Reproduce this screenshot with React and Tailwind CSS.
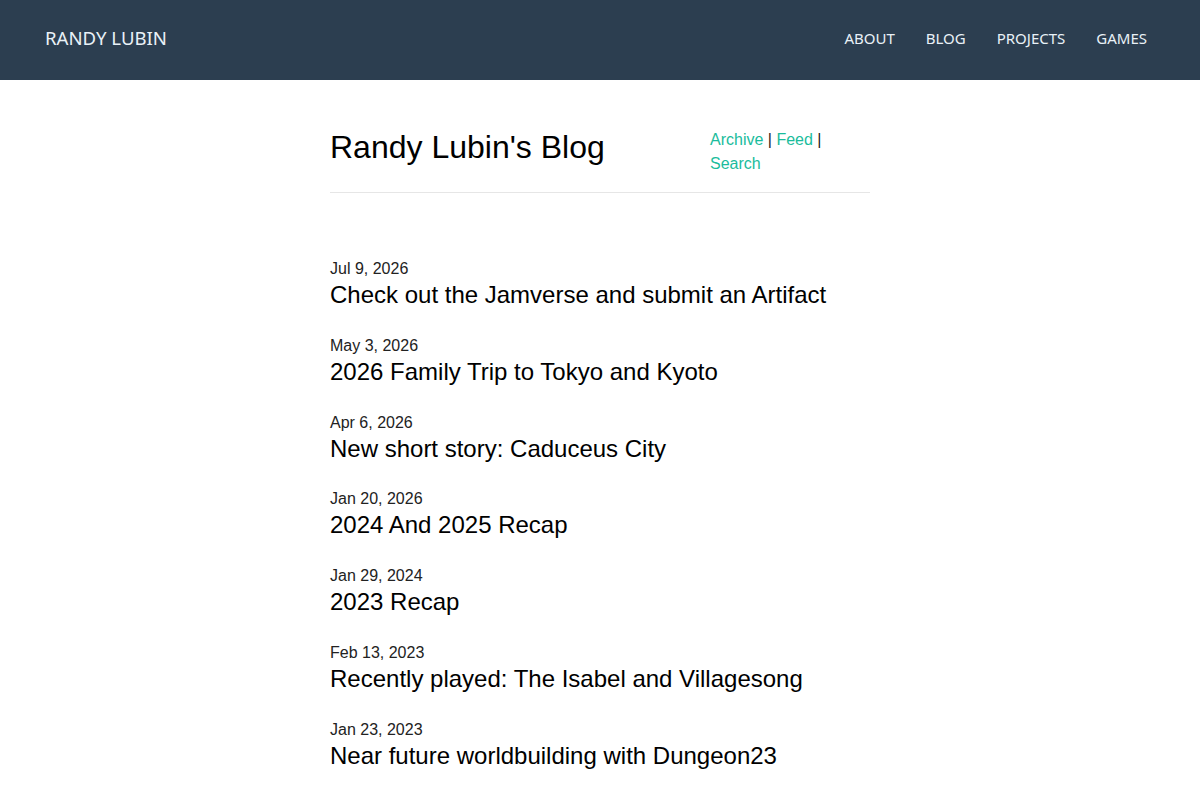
export default function App() {
  const posts = [
    ["Jul 9, 2026", "Check out the Jamverse and submit an Artifact"],
    ["May 3, 2026", "2026 Family Trip to Tokyo and Kyoto"],
    ["Apr 6, 2026", "New short story: Caduceus City"],
    ["Jan 20, 2026", "2024 And 2025 Recap"],
    ["Jan 29, 2024", "2023 Recap"],
    ["Feb 13, 2023", "Recently played: The Isabel and Villagesong"],
    ["Jan 23, 2023", "Near future worldbuilding with Dungeon23"],
  ];
  return (
    <div className="min-h-screen bg-white" style={{ fontFamily: '"Liberation Sans", Arial, sans-serif' }}>
      <header className="h-[80px] bg-[#2c3e50] flex items-center justify-between pl-[45px] pr-[53px] pb-[4px]" style={{ fontFamily: '"Noto Sans", sans-serif' }}>
        <div className="text-[18.6px] text-[#e9f1f7]">RANDY LUBIN</div>
        <nav className="flex gap-[31px] text-[15px] text-[#e9f1f7]">
          <span>ABOUT</span>
          <span>BLOG</span>
          <span>PROJECTS</span>
          <span>GAMES</span>
        </nav>
      </header>
      <main className="w-[540px] mx-auto pt-[49px]">
        <div className="flex justify-between items-start border-b border-[#e6e6e6] pb-[16px]">
          <h1 className="text-[32px] leading-[36px] text-black">Randy Lubin's Blog</h1>
          <div className="w-[160px] text-[16px] leading-[24px] text-[#222] -mt-[1px]">
            <span className="text-[#1abc9c]">Archive</span> | <span className="text-[#1abc9c]">Feed</span> |{" "}
            <span className="text-[#1abc9c]">Search</span>
          </div>
        </div>
        <div className="pt-[64px]">
          {posts.map(([d, t]) => (
            <div key={t} className="mb-[24.8px]">
              <div className="text-[16px] leading-[24px] text-[#222]">{d}</div>
              <div className="text-[24px] leading-[28px] text-black">{t}</div>
            </div>
          ))}
        </div>
      </main>
    </div>
  );
}
